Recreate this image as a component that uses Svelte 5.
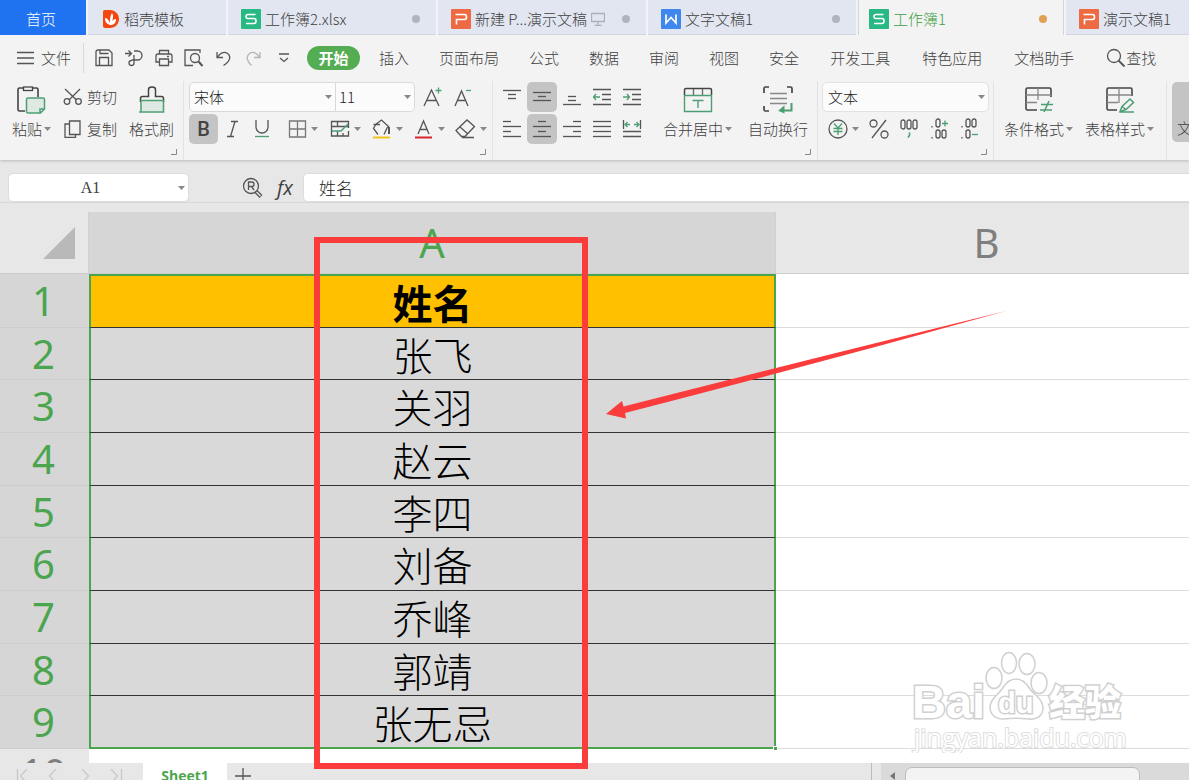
<script>
  const G = "#4d9e75";
  const tabs = [
    { icon: "docer", label: "稻壳模板", small: true },
    { icon: "s", label: "工作簿2.xlsx", dot: true },
    { icon: "p", label: "新建 P...演示文稿", screen: true, dot: true },
    { icon: "w", label: "文字文稿1", dot: true },
    { icon: "s", label: "工作簿1", dot: true, active: true },
    { icon: "p", label: "演示文稿1" },
  ];
  const quick = ["save", "export", "print", "preview", "undo", "redo", "more"];
  const menu = ["插入", "页面布局", "公式", "数据", "审阅", "视图", "安全"];
  const menuExtra = ["开发工具", "特色应用", "文档助手"];
  const names = ["姓名", "张飞", "关羽", "赵云", "李四", "刘备", "乔峰", "郭靖", "张无忌"];
  const heights = [54, 52, 53, 53, 52, 53, 53, 52, 53];

  const lines = (rows) =>
    rows.map(([x, y, w]) => `<path d="M${x} ${y}.5h${w}"/>`).join("");
  const zeros = (list, h) =>
    list.map(([x, y]) => `<rect x="${x}" y="${y}" width="4" height="${h}" rx="2"/>`).join("");

  // every icon is [width, height, markup]
  const icons = {
    docer: [20, 20, `<path d="M2 3q0-2 2-2h5c5 0 9 4 9 9s-4 9-9 9H4q-2 0-2-2z" fill="#f4470f" stroke="none"/><path d="M9 16c-3-1-5-3-5-7 2 0 4 2 5 5 0-4 0-7 2-10 2 3 1 7-1 10 1-3 3-4 5-4 0 4-2 6-6 6z" fill="#fff" stroke="none"/>`],
    s: [20, 20, `<rect width="20" height="20" rx="1" fill="#27b883" stroke="none"/><path d="M14.5 5.5H7q-2 0-2 2t2 2h6q2 0 2 2.500t-2 2.500H5" stroke="#fff" stroke-width="1.600"/>`],
    p: [20, 20, `<rect width="20" height="20" rx="1" fill="#ee6a42" stroke="none"/><path d="M4.500 5.500h9q2 0 2 2.500t-2 2.500h-8v5" stroke="#fff" stroke-width="1.600"/>`],
    w: [20, 20, `<rect width="20" height="20" rx="1" fill="#3f87ee" stroke="none"/><path d="M5 5.500v8.500l5-5.500 5 5.500V5.500" stroke="#fff" stroke-width="1.700"/>`],
    screen: [14, 14, `<path d="M.5 1.500h13v8H.5zM7 10v3M3.500 13.500h7" stroke="#aab0ba"/>`],
    burger: [18, 14, `<path d="M0 1.500h17M0 7h17M0 12.500h17"/>`],
    save: [18, 18, `<path d="M1 3q0-2 2-2h11l3 3v12.500H1zM4.500 16V8.500h9V16M5 1v3.500h8.500"/>`],
    export: [18, 18, `<path d="M0 4.500h6M3.500 1.500l3 3-3 3M9 2h3.500a4.500 4.500 0 0 1 0 9H6.500M9 6v8a2.500 2.500 0 1 1-2.500-2.500"/>`],
    print: [18, 18, `<path d="M4.500 5V1.500h9V5M4 13H1V7q0-2 2-2h12q2 0 2 2v6h-3M4.500 10h9v6.500h-9zM12 7.500h2"/>`],
    preview: [20, 18, `<path d="M16 4V1H1v15.500h8"/><circle cx="11" cy="9" r="4.500"/><path d="M14.500 12.500l4 4.500" stroke-width="2"/>`],
    undo: [18, 18, `<path d="M2 3v5.500h6M2.500 8C5 4 9 2 12.500 4.500c4 3 2.500 8-4 12"/>`],
    redo: [18, 18, `<path d="M15 3v5.500H9M14.500 8C12 4 8 2 4.500 4.500c-4 3-2.500 8 2 12" stroke="#b4b4b4"/>`],
    more: [12, 10, `<path d="M1 1h10M2 5l4 3.500L10 5"/>`],
    search: [20, 20, `<circle cx="8" cy="8" r="6.500"/><path d="M12.500 12.500l6 6" stroke-width="1.800"/>`],
    paste: [30, 28, `<path d="M8 25H2.500Q1 25 1 23.500v-20Q1 2 2.500 2H7M15 2h4.500Q21 2 21 3.500V11" stroke="#444" stroke-width="1.600"/><rect x="6.500" y="1" width="9" height="3.500" stroke="#444"/><path d="M11 12h15q1.500 0 1.500 1.500V23l-4 4H11q-1.500 0-1.500-1.500v-12Q9.500 12 11 12zM27 23h-4v4" fill="#dfe9e3" stroke="${G}" stroke-width="1.500"/>`],
    cut: [20, 18, `<path d="M2 1l11.500 11M17 1L6 12"/><circle cx="4" cy="13.500" r="2.800"/><circle cx="15.500" cy="13.500" r="2.800"/>`],
    copy: [20, 18, `<path d="M6.500 1h10.500v13.500H6.500zM6 4H2v13.500h10.500v-3"/>`],
    brush: [28, 28, `<path d="M3 14v11h22V14z" fill="#dfe9e3" stroke="none"/><path d="M2.500 16v-3.500q0-2 2-2h6V3.500Q10.500 1 14 1t3.500 2.500v7h6q2 0 2 2V16" stroke="#444" stroke-width="1.500"/><path d="M2.500 14.500h23V26H1M3 16v10" stroke="${G}" stroke-width="1.500"/>`],
    italic: [14, 18, `<path d="M5 1.500h7M1 16.500h7M9 1.500l-4.500 15"/>`],
    underline: [16, 18, `<path d="M2 0v7a6 6 0 0 0 12 0V0"/><path d="M1 16.500h14" stroke="${G}"/>`],
    bigger: [20, 22, `<path d="M1 20L8.500 4 16 20M3.500 14.500h10"/><path d="M12.500 4.500h6M15.500 1.500v6" stroke="${G}"/>`],
    smaller: [20, 22, `<path d="M2 20L8.500 5 15 20M4.500 14.500h8"/><path d="M13 4.500h5" stroke="${G}"/>`],
    borders: [19, 19, `<path d="M1.500 1h16v16h-16zM9.500 1v16M1.500 9h16" stroke="#777"/>`],
    tablefill: [20, 18, `<path d="M18.500 8V1.500h-17v14.500h17v-5M1.500 6.500h17M7.500 1.500v5M7.500 11v5M13 13v3"/><path d="M2 11h9l7-7" stroke="${G}" stroke-width="1.500"/>`],
    bucket: [20, 20, `<path d="M1.500 5.500H8M3.500 5.500L9.500 1l7.500 7M4 5L1.500 9.500 6 15.500M15.500 8L12 15.500"/><path d="M17 8v7" stroke-width="2"/><path d="M1 18.500h17" stroke="#f2c21c" stroke-width="2"/>`],
    fontcolor: [20, 20, `<path d="M4 15L9.500 2 15 15M6 10.500h7"/><path d="M1 18.500h17" stroke="#d9242c" stroke-width="2"/>`],
    eraser: [21, 20, `<path d="M1 11.500L12 1l7.500 6.500-9.500 10H6.500zM5 8l8 7M7 18.500h12"/>`],
    top: [18, 18, lines([[0, 2, 18], [5, 6, 8], [5, 10, 8]])],
    middle: [18, 18, lines([[0, 4, 18], [5, 8, 8], [0, 12, 18]])],
    bottom: [18, 18, lines([[5, 8, 8], [5, 12, 8], [0, 16, 18]])],
    outdent: [18, 18, `<path d="M0 1.500h18M9 6.500h9M9 11.500h9M0 16.500h18"/><path d="M7 9H.5M3 6L.5 9 3 12" stroke="${G}"/>`],
    indent: [18, 18, `<path d="M0 1.500h18M9 6.500h9M9 11.500h9M0 16.500h18"/><path d="M0 9h6.500M4 6l2.500 3L4 12" stroke="${G}"/>`],
    left: [18, 18, lines([[0, 1, 8], [0, 6, 18], [0, 11, 8], [0, 16, 18]])],
    center: [18, 18, lines([[5, 1, 8], [0, 6, 18], [5, 11, 8], [0, 16, 18]])],
    right: [18, 18, lines([[10, 1, 8], [0, 6, 18], [10, 11, 8], [0, 16, 18]])],
    justify: [18, 18, lines([[0, 1, 18], [0, 6, 18], [0, 11, 18], [0, 16, 18]])],
    distribute: [20, 18, `<path d="M1.500 0v9M18.500 0v9M1 11.500h18M1 16.500h18"/><path d="M3 4.500h5M5.500 2L3 4.500 5.500 7M17 4.500h-5M14.500 2L17 4.500 14.500 7" stroke="${G}"/>`],
    merge: [30, 28, `<path d="M1.500 9V4Q1.500 2.500 3 2.500h24Q28.500 2.500 28.500 4v5" stroke="#444" stroke-width="1.500"/><path d="M10.500 3v6M19.500 3v6" stroke="#666"/><path d="M1.500 9.500h27v16h-27zM9.500 14.500h11M15 14.500V22" stroke="${G}" stroke-width="1.400"/>`],
    wrap: [30, 28, `<path d="M1 7V2.500Q1 1 2.500 1H6M24 1h3.500Q29 1 29 2.500V7M1 20v3.500Q1 25 2.500 25H6" stroke="#444" stroke-width="1.700"/><path d="M7 7.500h17M7 12.500h17M7 17.500h17" stroke="#888"/><path d="M28.500 17v7.500H17M20.500 21.500l-3.500 3 3.500 1.500z" stroke="${G}" stroke-width="2"/>`],
    yen: [20, 20, `<circle cx="10" cy="10" r="9"/><path d="M6 4.500L10 9l4-4.500M5.500 9.500h9M5.500 12.500h9M10 9v7" stroke="${G}"/>`],
    percent: [20, 20, `<circle cx="4.500" cy="4.500" r="3.500"/><circle cx="15.500" cy="15.500" r="3.500"/><path d="M17 1L3 19"/>`],
    thousands: [20, 22, zeros([[2, 2], [8, 2], [14, 2]], 9) + `<path d="M10.500 14.500v3l-1.500 2" stroke="${G}" stroke-width="1.600"/>`],
    moredec: [20, 22, zeros([[7, 1], [7, 12], [13, 12]], 8) + `<path d="M3 8v1.500M3 19v1.500"/><path d="M13 5.500h6M16 2.500v6" stroke="${G}"/>`],
    lessdec: [20, 22, zeros([[7, 1], [13, 1], [7, 12]], 8) + `<path d="M3 8v1.500M3 19v1.500"/><path d="M13 16.500h6" stroke="${G}"/>`],
    condition: [30, 28, `<path d="M13 24H3.500Q2 24 2 22.500v-19Q2 2 3.500 2h22Q27 2 27 3.500V11" stroke="#444" stroke-width="1.600"/><path d="M2 9h25M2 16.500h11M14 2v12" stroke="#888"/><path d="M17 18.500h12M16 24h12M25 15l-5 11" stroke="${G}" stroke-width="1.600"/>`],
    tablestyle: [30, 28, `<path d="M12 24H3.500Q2 24 2 22.500v-19Q2 2 3.500 2h22Q27 2 27 3.500V10" stroke="#444" stroke-width="1.600"/><path d="M2 9h25M2 16.500h11M14 2v15" stroke="#888"/><path d="M15 25.500l2-5L25 13l3.500 3.500-7.500 7zM17 20.500l4 3M15 26h14" stroke="${G}" stroke-width="1.500"/>`],
    lookup: [22, 22, `<circle cx="9" cy="9" r="7.500"/><path d="M14 14.500l5 5" stroke-width="4"/><path d="M14.500 15l4 4" stroke="#e7e7e7" stroke-width="1.500"/><path d="M6.500 13V5H10q2 0 2 2.200t-2 2.300H6.500M9.500 9.500l2.500 3.500"/>`],
    first: [14, 14, `<path d="M1.500 0v14M11 0L4.500 7l6.500 7" stroke="#c8c8c8"/>`],
    prev: [14, 14, `<path d="M9 0L2.500 7 9 14" stroke="#c8c8c8"/>`],
    next: [14, 14, `<path d="M4 0l6.500 7L4 14" stroke="#c8c8c8"/>`],
    last: [14, 14, `<path d="M12.500 0v14M2 0l6.500 7L2 14" stroke="#c8c8c8"/>`],
    plus: [16, 16, `<path d="M8 0v16M0 8h16"/>`],
  };
</script>

{#snippet icon(name)}
  {@const [w, h, body] = icons[name]}
  <svg width={w} height={h} viewBox="0 0 {w} {h}" fill="none" stroke="#555" stroke-width="1.3" aria-hidden="true">
    {@html body}
  </svg>
{/snippet}

{#snippet caret()}
  <svg class="caret" width="7" height="4" viewBox="0 0 7 4" aria-hidden="true"><path d="M0 0h7L3.500 4z" fill="#888" /></svg>
{/snippet}

{#snippet tool(name, drop = false, on = false)}
  <button class="tool" class:drop class:on aria-label={name}>
    {@render icon(name)}
    {#if drop}{@render caret()}{/if}
  </button>
{/snippet}

{#snippet big(name, label, drop = true)}
  <button class="big">
    {@render icon(name)}
    <span>{label}{#if drop}{@render caret()}{/if}</span>
  </button>
{/snippet}

{#snippet corner()}
  <svg class="corner" width="6" height="6" viewBox="0 0 6 6" aria-hidden="true"><path d="M5.500 0v5.500H0" fill="none" stroke="#888" /></svg>
{/snippet}

<div class="app">
  <nav class="tabs">
    <button class="home">首页</button>
    {#each tabs as tab}
      <button class="tab" class:small={tab.small} class:active={tab.active}>
        {@render icon(tab.icon)}
        <span>{tab.label}</span>
        {#if tab.screen}{@render icon("screen")}{/if}
        {#if tab.dot}<i class="dot"></i>{/if}
      </button>
    {/each}
  </nav>

  <div class="menu">
    <button class="file">{@render icon("burger")}文件</button>
    <div class="quick">
      {#each quick as name}
        <button aria-label={name}>{@render icon(name)}</button>
      {/each}
    </div>
    <button class="start">开始</button>
    <div class="items">
      {#each menu as item}<button>{item}</button>{/each}
    </div>
    <div class="items extra">
      {#each menuExtra as item}<button>{item}</button>{/each}
      <button class="find">{@render icon("search")}查找</button>
    </div>
  </div>

  <div class="ribbon">
    <section class="group clip">
      {@render big("paste", "粘贴")}
      <div class="stack">
        <button class="text">{@render icon("cut")}剪切</button>
        <button class="text">{@render icon("copy")}复制</button>
      </div>
      {@render big("brush", "格式刷", false)}
      {@render corner()}
    </section>

    <section class="group font">
      <div class="row">
        <div class="combo family">
          <select aria-label="字体"><option>宋体</option></select>{@render caret()}
        </div>
        <div class="combo size">
          <select aria-label="字号"><option>11</option></select>{@render caret()}
        </div>
        {@render tool("bigger")}
        {@render tool("smaller")}
      </div>
      <div class="row">
        <button class="tool on bold">B</button>
        {@render tool("italic")}
        {@render tool("underline")}
        <div class="row drops">
          {#each ["borders", "tablefill", "bucket", "fontcolor", "eraser"] as name}
            {@render tool(name, true)}
          {/each}
        </div>
      </div>
      {@render corner()}
    </section>

    <section class="group align">
      <div class="stack">
        <div class="row">
          {@render tool("top")}
          {@render tool("middle", false, true)}
          {@render tool("bottom")}
          {@render tool("outdent")}
          {@render tool("indent")}
        </div>
        <div class="row">
          {@render tool("left")}
          {@render tool("center", false, true)}
          {@render tool("right")}
          {@render tool("justify")}
          {@render tool("distribute")}
        </div>
      </div>
      {@render big("merge", "合并居中")}
      {@render big("wrap", "自动换行", false)}
      {@render corner()}
    </section>

    <section class="group number">
      <div class="combo format">
        <select aria-label="数字格式"><option>文本</option></select>{@render caret()}
      </div>
      <div class="row">
        {@render tool("yen", true)}
        {@render tool("percent")}
        {@render tool("thousands")}
        {@render tool("moredec")}
        {@render tool("lessdec")}
      </div>
      {@render corner()}
    </section>

    <section class="group styles">
      {@render big("condition", "条件格式")}
      {@render big("tablestyle", "表格样式")}
    </section>

    <button class="pressed">文</button>
  </div>

  <div class="formula">
    <div class="namebox">
      <input value="A1" aria-label="名称框" />{@render caret()}
    </div>
    <button aria-label="lookup">{@render icon("lookup")}</button>
    <button class="fx">fx</button>
    <input class="content" value="姓名" aria-label="编辑栏" />
  </div>

  <main class="sheet">
    <table>
      <colgroup><col class="c0" /><col class="ca" /><col /></colgroup>
      <thead>
        <tr>
          <th class="all"><svg width="32" height="32" viewBox="0 0 32 32" aria-hidden="true"><path d="M32 0v32H0z" fill="#b9b9b9" /></svg></th>
          <th class="sel">A</th>
          <th class="colb">B</th>
        </tr>
      </thead>
      <tbody>
        {#each names as name, i}
          <tr style:height="{heights[i]}px">
            <th>{i + 1}</th>
            <td class="a">{name}</td>
            <td></td>
          </tr>
        {/each}
        <tr class="rest">
          <th>10</th>
          <td></td>
          <td></td>
        </tr>
      </tbody>
    </table>
    <div class="handle"></div>
    <div class="mark"></div>
    <svg class="arrow" width="400" height="110" viewBox="0 0 400 110" aria-hidden="true">
      <path d="M0 103L16 90l1.500 5.500Q200 49 400 0 210 53 19 102l1 5.500z" fill="#fb3c3c" />
    </svg>
    <svg class="watermark" width="220" height="104" viewBox="0 0 220 104" aria-hidden="true">
      <g fill="#fff" stroke="#d0d0d0" stroke-width="1.5">
        <ellipse cx="84" cy="29" rx="8" ry="10.500" />
        <ellipse cx="99" cy="14" rx="7.500" ry="10.500" />
        <ellipse cx="117" cy="15" rx="8" ry="10.500" />
        <ellipse cx="129" cy="34" rx="8" ry="10.500" />
        <path d="M106 30c7 0 11 5 14 10 4 6 13 10 13 19 0 8-7 12-14 11-8-1-18-1-26 0-7 0-13-4-13-12 0-8 8-12 12-18 3-5 7-10 14-10z" />
        <text x="2" y="69" font-size="47" font-weight="700">Bai</text>
        <text x="88" y="64" font-size="29" font-weight="700">du</text>
        <text class="cjk" x="139" y="67" font-size="36" font-weight="900">经验</text>
        <text class="url" x="4" y="98" font-size="25">jingyan.baidu.com</text>
      </g>
    </svg>
  </main>

  <footer>
    <div class="pages">
      {#each ["first", "prev", "next", "last"] as name}
        <button aria-label={name}>{@render icon(name)}</button>
      {/each}
    </div>
    <button class="sheettab">Sheet1</button>
    <button class="add" aria-label="plus">{@render icon("plus")}</button>
    <div class="scroll">
      <svg width="5" height="8" viewBox="0 0 5 8" aria-hidden="true"><path d="M5 0v8L0 4z" fill="#777" /></svg>
      <div class="thumb"></div>
    </div>
  </footer>
</div>

<style>
  :global(body) {
    margin: 0;
    overflow: hidden;
  }
  .app {
    display: flex;
    flex-direction: column;
    height: 100vh;
    overflow: hidden;
    background: #e7e7e7;
    color: #404040;
    font: 300 15px/20px "Noto Sans CJK SC", sans-serif;
  }
  .app :is(div, section, button, input, select, th, td) {
    box-sizing: border-box;
  }
  button,
  input,
  select {
    margin: 0;
    padding: 0;
    border: 0;
    background: none;
    color: inherit;
    font: inherit;
    white-space: nowrap;
  }
  svg {
    display: block;
    flex: none;
  }

  /* document tabs */
  .tabs {
    display: flex;
    flex: none;
    gap: 2px;
    height: 35px;
    background: #f1f3f7;
    overflow: hidden;
  }
  .home {
    flex: 0 0 86px;
    padding: 2px 4px 0 0;
    background: #1f73f1;
    color: #fff;
  }
  .tab {
    display: flex;
    flex: 0 0 208px;
    align-items: center;
    gap: 4px;
    padding: 3px 16px 0 13px;
    border-bottom: 1px solid #d3d6dc;
    background: #e1e6f0;
    box-sizing: border-box;
  }
  .tab.small {
    flex-basis: 138px;
    gap: 3px;
  }
  .tab.active {
    flex-basis: 206px;
    border: solid #d0d3da;
    border-width: 0 1px;
    padding-left: 10px;
    background: #f3f3f3;
    color: #3f9f43;
  }
  .dot {
    width: 8px;
    height: 8px;
    margin-left: auto;
    border-radius: 50%;
    background: #b0b4bc;
  }
  .active .dot {
    background: #e2a052;
  }

  /* menu */
  .menu {
    display: flex;
    flex: none;
    align-items: center;
    height: 46px;
    padding-left: 17px;
    background: #f3f3f3;
  }
  .file,
  .find,
  .text {
    display: flex;
    align-items: center;
  }
  .file {
    gap: 6px;
    height: 30px;
    padding-right: 12px;
    border-right: 1px solid #d8d8d8;
  }
  .quick {
    display: flex;
    flex: 0 0 223px;
    padding-left: 5px;
  }
  .quick button {
    display: flex;
    flex: 0 0 30px;
    justify-content: center;
    align-items: center;
  }
  .start {
    width: 53px;
    height: 24px;
    border-radius: 12px;
    background: #54ad53;
    color: #fff;
    font-weight: 700;
  }
  .items {
    display: flex;
    gap: 30px;
    padding-left: 19px;
  }
  .items.extra {
    gap: 32px;
    padding-left: 31px;
  }

  /* ribbon */
  .ribbon {
    display: flex;
    flex: none;
    height: 79px;
    background: #f3f3f3;
    box-shadow: 0 1px 3px #bbb;
    clip-path: inset(0 0 -4px 0);
  }
  .group {
    position: relative;
    display: flex;
    flex: none;
    padding-top: 1px;
    border-right: 1px solid #e2e2e2;
  }
  .corner {
    position: absolute;
    right: 6px;
    bottom: 5px;
  }
  .stack {
    display: flex;
    flex-direction: column;
    gap: 2px;
  }
  .row {
    display: flex;
    align-items: center;
  }
  .tool {
    display: flex;
    justify-content: center;
    align-items: center;
    gap: 5px;
    width: 30px;
    height: 30px;
    border-radius: 5px;
  }
  .tool.on {
    background: #c4c4c4;
  }
  .tool.drop {
    width: 42px;
    gap: 4px;
  }
  .drops {
    padding-left: 6px;
  }
  .big {
    display: flex;
    flex-direction: column;
    align-items: center;
    gap: 5px;
    height: 62px;
    padding-top: 4px;
  }
  .big span {
    display: flex;
    align-items: center;
    gap: 2px;
  }
  .text {
    gap: 4px;
    height: 30px;
  }
  .clip {
    width: 184px;
    gap: 12px;
    padding-left: 12px;
  }
  .font {
    flex-direction: column;
    gap: 2px;
    width: 309px;
    padding-left: 5px;
  }
  .bold {
    font: 500 20px/20px Roboto, sans-serif;
    color: #444;
  }
  .combo {
    display: flex;
    align-items: center;
    height: 30px;
    padding: 0 3px 0 5px;
    border: 1px solid #d9d9d9;
    border-radius: 5px;
    background: #fbfbfb;
  }
  .combo select {
    flex: 1;
    appearance: none;
    color: #222;
  }
  .family {
    width: 147px;
    padding-left: 4px;
    border-radius: 5px 0 0 5px;
  }
  .size {
    width: 79px;
    margin-right: 3px;
    padding-left: 3px;
    border-left: 0;
    border-radius: 0 5px 5px 0;
  }
  .align {
    width: 325px;
    gap: 16px;
    padding-left: 4px;
  }
  .number {
    flex-direction: column;
    gap: 2px;
    width: 176px;
    padding-left: 4px;
  }
  .format {
    width: 167px;
    border-color: #e2e2e2;
  }
  .styles {
    width: 173px;
    gap: 12px;
    padding-left: 10px;
  }
  .pressed {
    flex: 1;
    height: 60px;
    margin: 1px 0 0 5px;
    padding: 32px 0 0 5px;
    border-radius: 5px 0 0 5px;
    background: #c4c4c4;
    text-align: left;
    overflow: hidden;
  }

  /* formula bar */
  .formula {
    display: flex;
    flex: none;
    align-items: center;
    gap: 11px;
    height: 43px;
    padding: 13px 0 0 8px;
    border-bottom: 1px solid #d8d8d8;
    box-sizing: border-box;
  }
  .namebox {
    display: flex;
    align-items: center;
    width: 181px;
    height: 29px;
    margin-right: 42px;
    padding-right: 3px;
    border: 1px solid #dcdcdc;
    border-radius: 5px;
    background: #fff;
  }
  .namebox input {
    flex: 1;
    min-width: 0;
    padding-right: 6px;
    text-align: center;
    font: 16px/20px "Liberation Serif", serif;
  }
  .fx {
    width: 20px;
    font: italic 400 20px/22px "Open Sans", sans-serif;
  }
  .content {
    flex: 1;
    height: 29px;
    margin-left: -3px;
    padding-left: 15px;
    border: 1px solid #dcdcdc;
    border-right: 0;
    border-radius: 5px 0 0 5px;
    background: #fff;
    color: #222;
    font-size: 17px;
  }

  /* sheet */
  .sheet {
    position: relative;
    flex: 1;
    min-height: 0;
    padding-top: 9px;
  }
  table {
    width: 100%;
    table-layout: fixed;
    border-collapse: separate;
    border-spacing: 0;
  }
  .c0 {
    width: 89px;
  }
  .ca {
    width: 687px;
  }
  th,
  td {
    padding: 0;
    font-size: 40px;
    line-height: 50px;
    text-align: center;
  }
  th {
    background: #d6d6d6;
    color: #4ba54f;
    font-family: "Noto Sans", sans-serif;
    font-weight: 400;
    border-bottom: 1px solid #cdcdcd;
  }
  thead tr {
    height: 62px;
  }
  thead .all,
  thead .colb,
  .rest th {
    background: #e7e7e7;
    color: #7f7f7f;
  }
  .all svg {
    margin-left: 43px;
  }
  .all,
  .sel {
    border-right: 1px solid #d0d0d0;
  }
  .colb {
    padding-left: 8px;
  }
  tbody th {
    padding-right: 2px;
    line-height: 48px;
  }
  td {
    background: #fff;
    border-bottom: 1px solid #dcdcdc;
  }
  .a {
    border: solid #4ba54f;
    border-width: 0 2px;
    border-bottom: 1px solid #333;
    background: #d9d9d9;
    color: #000;
    line-height: 48px;
  }
  tr:first-child .a {
    border-top: 2px solid #4ba54f;
    background: #ffc000;
    font-weight: 700;
  }
  tr:nth-child(9) .a {
    border-bottom: 2px solid #4ba54f;
  }
  .rest {
    height: 53px;
  }
  .rest th {
    vertical-align: top;
  }
  .handle {
    position: absolute;
    left: 773px;
    top: 543px;
    width: 5px;
    height: 5px;
    background: #4ba54f;
    border: 1px solid #fff;
  }
  .mark {
    position: absolute;
    left: 314px;
    top: 34px;
    width: 274px;
    height: 532px;
    border: 6px solid #fb3c3c;
    z-index: 2;
  }
  .arrow {
    position: absolute;
    left: 606px;
    top: 108px;
  }
  .watermark {
    position: absolute;
    right: 59px;
    bottom: 10px;
    font-family: "Liberation Sans", sans-serif;
  }
  .watermark text {
    paint-order: stroke;
    stroke-width: 3px;
  }
  .cjk {
    font-family: "Noto Sans CJK SC", sans-serif;
  }
  .watermark .url {
    font-family: "Open Sans", sans-serif;
    font-weight: 400;
    stroke: #dedede;
    stroke-width: 2px;
  }

  /* sheet tabs */
  footer {
    position: relative;
    display: flex;
    flex: none;
    align-items: flex-start;
    height: 17px;
    background: #e7e7e7;
    overflow: hidden;
  }
  footer button {
    display: flex;
    justify-content: center;
    align-items: center;
    height: 26px;
  }
  .pages {
    display: flex;
    gap: 17px;
    padding: 0 20px 0 16px;
  }
  .sheettab {
    width: 84px;
    background: #fff;
    color: #4ba54f;
    font: 700 14px/20px "Open Sans", sans-serif;
  }
  .add {
    width: 32px;
  }
  .scroll {
    display: flex;
    width: 308px;
    gap: 10px;
    height: 26px;
    margin-left: auto;
    padding: 4px 0 0 9px;
    background: #dadada;
    box-shadow: -9px 0 0 #e7e7e7, -10px 0 0 #bbb;
  }
  .scroll svg {
    margin-top: 5px;
  }
  .thumb {
    width: 235px;
    height: 22px;
    border: 1px solid #bdbdbd;
    border-radius: 7px;
    background: #f3f3f3;
  }
</style>
